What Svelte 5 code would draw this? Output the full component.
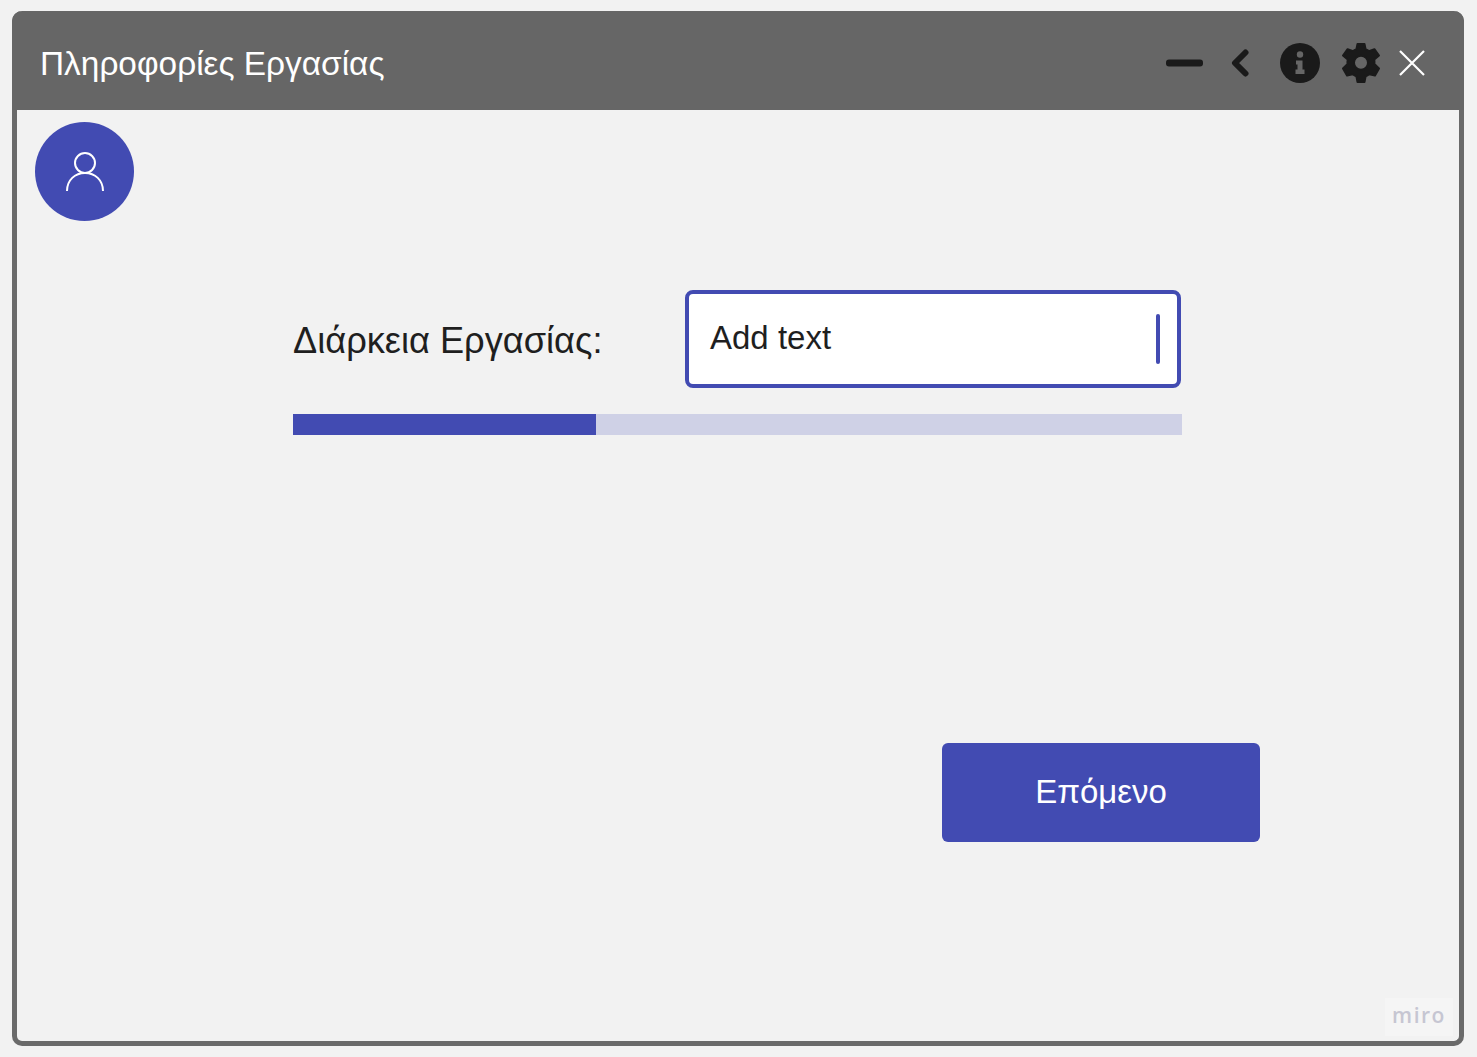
<script>
    let progress = 34.1;
</script>

<div class="page">
    <div class="window">
        <header class="titlebar">
            <h1>Πληροφορίες Εργασίας</h1>
            <div class="tools">
                <svg class="ic-minus" width="37" height="8" viewBox="0 0 37 8">
                    <rect width="37" height="7" y="0.5" rx="3" fill="#1a1a1a" />
                </svg>
                <svg class="ic-back" width="18" height="28" viewBox="0 0 18 28">
                    <path d="M14.5 3.5 L4 14 L14.5 24.5" fill="none" stroke="#1a1a1a" stroke-width="6" stroke-linecap="round" stroke-linejoin="round" />
                </svg>
                <svg class="ic-info" width="40" height="40" viewBox="0 0 40 40">
                    <circle cx="20" cy="20" r="20" fill="#1a1a1a" />
                    <circle cx="20" cy="11.5" r="3.2" fill="#666" />
                    <path d="M16 17.5 H22.5 V26.5 H24.5 V31 H15.5 V26.5 H17.5 V21.5 H16 Z" fill="#666" />
                </svg>
                <svg class="ic-gear" width="40" height="40" viewBox="0 0 40 40">
                    <path fill="#1a1a1a" stroke="#1a1a1a" stroke-width="2" stroke-linejoin="round" fill-rule="evenodd" d="M16.5 1 H23.5 L24.6 6.2 C25.8 6.7 26.9 7.3 27.9 8.1 L33.4 6.2 L38 12.6 L33.3 16.6 C33.5 17.9 33.5 19.2 33.3 20.5 L33.4 21 L38 25.5 L34 32.5 L28.2 31.3 C27.1 32.2 25.9 32.9 24.6 33.4 L23.5 39 H16.5 L15.4 33.4 C14.1 32.9 12.9 32.2 11.8 31.3 L6 32.5 L2 25.5 L6.6 21 C6.4 19.5 6.4 18 6.7 16.6 L2 12.6 L6.6 6.2 L12.1 8.1 C13.1 7.3 14.2 6.7 15.4 6.2 Z M20 12.8 A7 7 0 1 0 20 26.8 A7 7 0 1 0 20 12.8 Z" />
                </svg>
                <svg class="ic-close" width="26" height="26" viewBox="0 0 26 26">
                    <path d="M1 1 L25 25 M25 1 L1 25" stroke="#fff" stroke-width="2.2" fill="none" />
                </svg>
            </div>
        </header>

        <main class="content">
            <div class="avatar">
                <svg width="40" height="42" viewBox="0 0 40 42">
                    <circle cx="20" cy="12" r="10" fill="none" stroke="#fff" stroke-width="2" />
                    <path d="M2 40 C2 29 10 22 20 22 C30 22 38 29 38 40" fill="none" stroke="#fff" stroke-width="2" />
                </svg>
            </div>

            <div class="form">
                <div class="row">
                    <span class="label">Διάρκεια Εργασίας:</span>
                    <div class="field">
                        <span>Add text</span>
                        <i class="caret"></i>
                    </div>
                </div>
                <div class="bar">
                    <div class="fill" style="width: {progress}%"></div>
                </div>
            </div>

            <button class="next">Επόμενο</button>
        </main>

        <div class="miro">miro</div>
    </div>
</div>

<style>
    :global(body) {
        margin: 0;
        background: #f2f2f2;
    }
    .page {
        height: 1057px;
        padding: 11px 13px 11px 12px;
        box-sizing: border-box;
        font-family: "Liberation Sans", Arial, sans-serif;
    }
    .window {
        position: relative;
        height: 100%;
        box-sizing: border-box;
        border: 5px solid #6a6a6a;
        border-top: 0;
        border-radius: 10px;
        display: flex;
        flex-direction: column;
        background: #f2f2f2;
    }
    .titlebar {
        height: 99px;
        margin: 0 -5px;
        padding: 5px 39px 0 28px;
        box-sizing: border-box;
        background: #666;
        border-radius: 10px 10px 0 0;
        display: flex;
        align-items: center;
        justify-content: space-between;
        flex-shrink: 0;
    }
    h1 {
        margin: 2px 0 0;
        font-size: 33.4px;
        font-weight: 400;
        color: #fff;
    }
    .tools {
        display: flex;
        align-items: center;
    }
    .tools svg {
        display: block;
    }
    .ic-back {
        margin-left: 28px;
    }
    .ic-info {
        margin-left: 31px;
    }
    .ic-gear {
        margin-left: 21px;
    }
    .ic-close {
        margin-left: 18px;
    }
    .content {
        padding: 12px 0 0 18px;
        display: flex;
        flex-direction: column;
        align-items: flex-start;
    }
    .avatar {
        width: 99px;
        height: 99px;
        border-radius: 50%;
        background: #424bb2;
        display: flex;
        align-items: center;
        justify-content: center;
    }
    .form {
        width: 889px;
        margin: 69px 0 0 258px;
    }
    .row {
        display: flex;
        align-items: center;
        justify-content: space-between;
        padding-right: 1px;
    }
    .label {
        font-size: 36.2px;
        margin-top: 4px;
        color: #1f1f1f;
    }
    .field {
        width: 496px;
        height: 98px;
        box-sizing: border-box;
        border: 4px solid #424bb2;
        border-radius: 8px;
        background: #fff;
        padding: 0 17px 0 21px;
        display: flex;
        align-items: center;
        justify-content: space-between;
        font-size: 33px;
        color: #1f1f1f;
    }
    .field span {
        margin-top: -3px;
    }
    .caret {
        display: block;
        width: 4px;
        height: 50px;
        border-radius: 2px;
        background: #424bb2;
    }
    .bar {
        height: 21px;
        margin-top: 26px;
        background: #cfd1e6;
    }
    .fill {
        height: 100%;
        background: #424bb2;
    }
    .next {
        width: 318px;
        height: 99px;
        margin: 308px 0 0 907px;
        border: 0;
        border-radius: 6px;
        background: #424bb2;
        color: #fff;
        font-family: inherit;
        font-size: 33px;
        padding-bottom: 2px;
    }
    .miro {
        position: absolute;
        right: 6px;
        bottom: 5px;
        width: 68px;
        height: 38px;
        padding-bottom: 4px;
        box-sizing: border-box;
        background: #f5f5f5;
        color: #c6c6d2;
        font-family: "Open Sans", sans-serif;
        font-size: 21px;
        font-weight: 600;
        letter-spacing: 1.5px;
        display: flex;
        align-items: center;
        justify-content: center;
    }
</style>
